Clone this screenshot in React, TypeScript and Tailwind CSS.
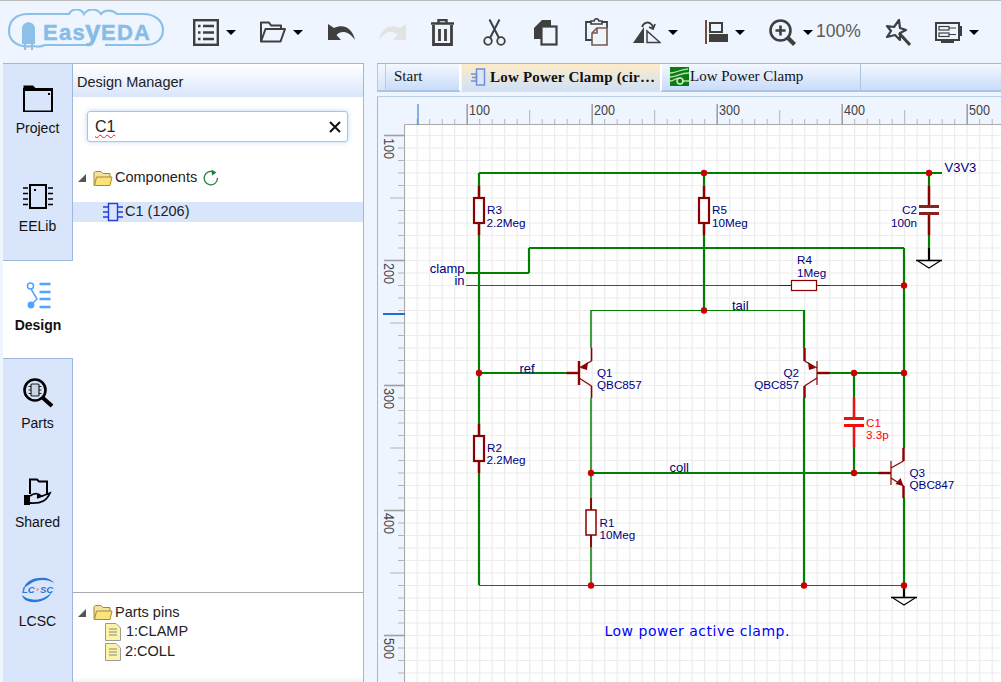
import React from "react";

const Caret = () => <span className="ml-[7px] w-0 h-0 border-x-[5px] border-x-transparent border-t-[5px] border-t-black" />;

function Logo() {
  return (
    <svg width="157" height="46" viewBox="6 13 157 46" className="shrink-0">
      <path d="M33 50 C18 52 8 46 8 35 C8 24 16 18 27 18 L68 18 C71 12 80 12 83 18 C87 12 96 12 100 18 C104 13 112 14 116 18 L142 18 C154 18 162 25 162 34 C162 44 154 49 144 49 L104 49 M90 49 L44 49 C40 51 37 51 33 50" fill="none" stroke="#8cc0e8" strokeWidth="2.2" />
      <path d="M21 48 L21 33 C21 24 34 24 34 33 L34 48 Z" fill="#8cc0e8" />
      <path d="M24 47 V54 M31 47 V54" stroke="#8cc0e8" strokeWidth="2.2" />
      <text x="42" y="44" fill="#86bce6" stroke="#86bce6" strokeWidth="0.4" fontFamily="Liberation Sans" fontWeight="700" fontSize="22" letterSpacing="1.3">Eas<tspan fontSize="28" dx="-1">y</tspan><tspan dx="-1">EDA</tspan></text>
    </svg>
  );
}

const Ic = ({ w, h, vb, children, cls }: { w: number; h: number; vb: string; children: React.ReactNode; cls: string }) => (
  <svg width={w} height={h} viewBox={vb} className={"shrink-0 " + cls}>{children}</svg>
);

function Toolbar() {
  const ink = "#3f3f3f";
  return (
    <div className="flex items-center h-[63px] bg-[#eef5ff] border-t border-t-[#bdbdbd] shrink-0 pl-[7px]">
      <Logo />
      <Ic cls="ml-[29px]" w={26} h={27} vb="0 0 26 27">
        <rect x="1.2" y="1.2" width="23.6" height="24.6" fill="none" stroke={ink} strokeWidth="2.4" />
        <path d="M5 7h2.5M5 13.5h2.5M5 20h2.5M10 7h11M10 13.5h11M10 20h11" stroke={ink} strokeWidth="2.4" />
      </Ic>
      <Caret />
      <Ic cls="ml-[24px]" w={26} h={22} vb="0 0 26 22">
        <path d="M1 20.5 V1.5 H9 L11 4.5 H21 V8 M1 20.5 L5.5 8 H25 L20.5 20.5 Z" fill="none" stroke={ink} strokeWidth="2" strokeLinejoin="round" />
      </Ic>
      <Caret />
      <Ic cls="ml-[25px]" w={27} h={18} vb="0 0 27 18">
        <path d="M0 1 L0 17 L13 17 L8.5 12 C13 7 21 8 27 17 C25 7 17 0 6 5 Z" fill={ink} />
      </Ic>
      <Ic cls="ml-[24px]" w={27} h={18} vb="0 0 27 18">
        <path d="M27 1 L27 17 L14 17 L18.5 12 C14 7 6 8 0 17 C2 7 10 0 21 5 Z" fill="#e3e3e3" />
      </Ic>
      <Ic cls="ml-[25px]" w={23} h={27} vb="0 0 23 27">
        <path d="M0 4.5H23M7.5 4V1H15.5V4" fill="none" stroke={ink} strokeWidth="2.4" />
        <path d="M2.5 6V25.5H20.5V6M8.5 10V22M14.5 10V22" fill="none" stroke={ink} strokeWidth="2.8" />
      </Ic>
      <Ic cls="ml-[29px]" w={23} h={27} vb="0 0 23 27">
        <circle cx="5" cy="22" r="3.8" fill="none" stroke={ink} strokeWidth="1.8" />
        <circle cx="18" cy="22" r="3.8" fill="none" stroke={ink} strokeWidth="1.8" />
        <path d="M7 19 L16.5 0.5 M16 19 L6.5 0.5" stroke={ink} strokeWidth="2" />
      </Ic>
      <Ic cls="ml-[27px]" w={25} h={27} vb="0 0 25 27">
        <path d="M1 9 L9 1 H18 V7 H10 V20 H1 Z" fill={ink} />
        <rect x="8.5" y="7.5" width="15" height="18" fill="#eef5ff" stroke={ink} strokeWidth="2.2" />
      </Ic>
      <Ic cls="ml-[27px]" w={23} h={28} vb="0 0 23 28">
        <path d="M6 4 H1 V22 H7 M16 4 H22 V10" fill="none" stroke={ink} strokeWidth="1.8" />
        <path d="M6 6 V3 H9 C9.5 0 13.5 0 14 3 H17 V6 Z" fill="#eef5ff" stroke={ink} strokeWidth="1.6" />
        <path d="M7 15 L12 10 H22 V27 H7 Z M7 15 H12 V10" fill="#eef5ff" stroke="#7a5a4a" strokeWidth="1.6" />
      </Ic>
      <Ic cls="ml-[25px]" w={28} h={23} vb="0 0 28 23">
        <path d="M0 22 L11 6 V22 Z" fill={ink} />
        <path d="M14 21.5 H27 L14 10 Z" fill="none" stroke={ink} strokeWidth="1.5" />
        <path d="M9 6 C11 1 16 0 19 4 L20 7 M16 6 L20 8 L22 3" fill="none" stroke={ink} strokeWidth="1.8" />
      </Ic>
      <Caret />
      <Ic cls="ml-[27px]" w={23} h={24} vb="0 0 23 24">
        <path d="M1 0 V24" stroke="#7a4a3a" strokeWidth="2" />
        <rect x="5" y="3" width="12" height="9" fill="none" stroke={ink} strokeWidth="2" />
        <rect x="4" y="14" width="19" height="8" fill={ink} />
      </Ic>
      <Caret />
      <Ic cls="ml-[24px]" w={27} h={27} vb="0 0 27 27">
        <circle cx="11.5" cy="11.5" r="10" fill="none" stroke={ink} strokeWidth="2.6" />
        <path d="M6.5 11.5H16.5M11.5 6.5V16.5" stroke={ink} strokeWidth="2.6" />
        <path d="M18.5 18.5 L25.5 25.5" stroke={ink} strokeWidth="4.2" />
      </Ic>
      <Caret />
      <span className="ml-[3px] w-[46px] text-[17.5px] leading-none text-[#5a5a5a] [font-family:'Liberation_Sans',sans-serif]">100%</span>
      <Ic cls="ml-[22px]" w={27} h={27} vb="0 0 27 27">
        <path d="M3 7 L10 8 L15 1 L16 9 L22 11 L16 14 L16 21 L11 16 L3 18 L7 12 Z" fill="none" stroke={ink} strokeWidth="2.2" strokeLinejoin="round" />
        <path d="M15 14 L26 26" stroke={ink} strokeWidth="3" />
      </Ic>
      <Ic cls="ml-[24px]" w={27} h={21} vb="0 0 27 21">
        <rect x="1" y="1" width="23" height="17" fill="none" stroke={ink} strokeWidth="2" />
        <path d="M24 4H27V14H24" fill={ink} />
        <rect x="4" y="4.5" width="10" height="3.5" fill="none" stroke={ink} strokeWidth="1.2" />
        <rect x="4" y="11" width="10" height="3.5" fill="none" stroke={ink} strokeWidth="1.2" />
        <path d="M14 6h7M14 12.5h7" stroke={ink} strokeWidth="1.2" />
        <path d="M6 19.5H19" stroke={ink} strokeWidth="3" />
      </Ic>
      <Caret />
    </div>
  );
}

const sideIcons: Record<string, React.ReactNode> = {
  Project: (
    <svg width="30" height="27" viewBox="0 0 30 27">
      <path d="M0.5 0.5 H10 L13.5 4 H29.5 V6 H0.5 Z" fill="#000" />
      <rect x="1" y="4" width="28" height="22.5" fill="none" stroke="#000" strokeWidth="2" />
      <rect x="25" y="8" width="2" height="2" fill="#000" />
    </svg>
  ),
  EELib: (
    <svg width="30" height="26" viewBox="0 0 30 26">
      <rect x="7" y="1" width="16" height="23" fill="none" stroke="#000" strokeWidth="2" />
      <rect x="11" y="5" width="2" height="2" fill="#000" />
      <path d="M0 4h5M0 9.5h5M0 15h5M0 20.5h5M25 4h5M25 9.5h5M25 15h5M25 20.5h5" stroke="#000" strokeWidth="1.6" />
    </svg>
  ),
  Design: (
    <svg width="26" height="28" viewBox="0 0 26 28">
      <circle cx="5.5" cy="5" r="3" fill="none" stroke="#4da3ff" strokeWidth="1.5" />
      <path d="M6 8 L12 18 L7 23" fill="none" stroke="#4da3ff" strokeWidth="1.5" />
      <circle cx="6" cy="24" r="3.4" fill="#4da3ff" />
      <path d="M14.5 3H25.5M14.5 11H25.5M14.5 18H25.5M14.5 26H25.5" stroke="#4da3ff" strokeWidth="2.4" />
    </svg>
  ),
  Parts: (
    <svg width="30" height="30" viewBox="0 0 30 30">
      <circle cx="12" cy="12" r="10.5" fill="none" stroke="#000" strokeWidth="2.6" />
      <rect x="8" y="6" width="8" height="12" rx="1" fill="#c9d4e4" stroke="#222" strokeWidth="1.2" />
      <path d="M5.5 8.5h2.5M5.5 12h2.5M5.5 15.5h2.5M16 8.5h2.5M16 12h2.5M16 15.5h2.5" stroke="#222" />
      <path d="M20 20 L29 28" stroke="#000" strokeWidth="4" />
    </svg>
  ),
  Shared: (
    <svg width="28" height="28" viewBox="0 0 28 28">
      <path d="M6 16 V1.5 H13 L15 3.5 H23 V17" fill="none" stroke="#000" strokeWidth="2" />
      <rect x="0" y="17" width="6" height="10" fill="#000" />
      <path d="M6 18 C10 15 14 15 17 18 H13 M13 20 L26 15 C23 22 18 26 6 25" fill="none" stroke="#000" strokeWidth="1.8" />
    </svg>
  ),
  LCSC: (
    <svg width="32" height="26" viewBox="0 0 32 26">
      <path d="M2 11 C4 3 14 0 24 1 C28 2 31 4 32 6 C26 2 14 2 8 7 C5 9 3 10 2 11 Z" fill="#2a78d8" />
      <path d="M30 14 C28 22 18 26 9 25 C4 24 1 22 0 18 C6 24 18 24 25 19 C27 18 29 16 30 14 Z" fill="#2a78d8" />
      <text x="0" y="16" fontSize="9.5" fontStyle="italic" fontWeight="700" fill="#2a78d8" fontFamily="Liberation Sans">LC</text>
      <text x="18" y="16" fontSize="9.5" fontStyle="italic" fontWeight="700" fill="#2a78d8" fontFamily="Liberation Sans">SC</text>
      <circle cx="15.5" cy="12.5" r="1.5" fill="#f0a0a0" />
    </svg>
  ),
};

const sideItems = [
  { n: "Project", cls: "h-[98px] flex flex-col items-center justify-end pb-[26px] gap-[7px]" },
  { n: "EELib", cls: "h-[98px] flex flex-col items-center justify-end pb-[26px] gap-[6px]" },
  { n: "Design", cls: "h-[99px] -mr-px bg-white border-y border-y-[#9db9d9] flex flex-col items-center justify-end pb-[25px] gap-[7px] font-bold" },
  { n: "Parts", cls: "h-[98px] flex flex-col items-center justify-end pb-[26px] gap-[7px]" },
  { n: "Shared", cls: "h-[98px] flex flex-col items-center justify-end pb-[25px] gap-[7px]" },
  { n: "LCSC", cls: "h-[98px] flex flex-col items-center justify-end pb-[24px] gap-[8px]" },
];

function Sidebar() {
  return (
    <div className="w-[73px] shrink-0 pl-[3px] bg-[#eef5ff] flex flex-col">
      <div className="flex-1 flex flex-col bg-[#d9e5fb] border-r border-r-[#9db9d9] border-t border-t-[#9db9d9]">
        {sideItems.map(({ n, cls }) => (
          <div key={n} className={cls}>
            <div className="h-[30px] flex items-center justify-center">{sideIcons[n]}</div>
            <span className="text-[14px] leading-[16px] text-[#111]">{n}</span>
          </div>
        ))}
      </div>
    </div>
  );
}

const Folder = () => (
  <svg width="20" height="17" viewBox="0 0 20 17" className="shrink-0">
    <path d="M1 15.5 V3 C1 2 2 1.5 3 1.5 H8 L10 3.5 H17 V7" fill="#f3e2a0" stroke="#a88a30" />
    <path d="M1.5 15.5 L3.5 7 H19 L17 15.5 Z" fill="#fbe27a" stroke="#a88a30" strokeLinejoin="round" />
  </svg>
);
const Tri = () => <span className="w-0 h-0 border-l-[8px] border-l-transparent border-b-[8px] border-b-[#555] shrink-0" />;
const Doc = () => (
  <svg width="16" height="18" viewBox="0 0 16 18" className="shrink-0">
    <path d="M0.5 0.5H11L15.5 5V17.5H0.5Z" fill="#fbf3a6" stroke="#9a9a9a" />
    <path d="M4 6H12M4 9H12M4 12H12" stroke="#888" />
  </svg>
);

function Panel() {
  return (
    <div className="w-[291px] shrink-0 bg-white border-r border-r-[#9db9d9] border-t border-t-[#9db9d9] flex flex-col [font-family:'Liberation_Sans',sans-serif]">
      <div className="h-[32px] mt-px shrink-0 pl-[4px] pt-[4px] flex items-center text-[14.5px] text-[#222] bg-gradient-to-b from-white to-[#d9e5fb]">Design Manager</div>
      <div className="mx-[14px] mt-[14px] h-[31px] w-[261px] shrink-0 flex items-center justify-between pl-[7px] pr-[5px] border border-[#9bc9ef] rounded-[3px] shadow-[0_0_5px_#b5d8f5]">
        <span className="text-[16px] text-[#222] underline decoration-wavy decoration-[#e02020] decoration-1 underline-offset-2">C1</span>
        <svg width="14" height="14" viewBox="0 0 14 14"><path d="M2 2L12 12M12 2L2 12" stroke="#111" strokeWidth="2" /></svg>
      </div>
      <div className="mt-[26px] pl-[5px] flex items-center h-[20px] text-[14.5px] text-[#222]">
        <Tri />
        <span className="ml-[7px]"><Folder /></span>
        <span className="ml-[2px]">Components</span>
        <svg width="18" height="18" viewBox="0 0 18 18" className="ml-[5px]">
          <path d="M15.5 9 A6.7 6.7 0 1 1 11.5 3" fill="none" stroke="#1f7f3a" strokeWidth="1.3" />
          <path d="M9.5 0.5 L14.5 3.5 L10 6.5 Z" fill="#1f7f3a" />
        </svg>
      </div>
      <div className="mt-[14px] h-[20px] bg-[#d9e5fb] pl-[30px] flex items-center text-[14.5px] text-[#222]">
        <svg width="20" height="20" viewBox="0 0 20 20" className="shrink-0">
          <rect x="5.5" y="1.5" width="9" height="17" fill="none" stroke="#1f3fe0" strokeWidth="1.4" />
          <path d="M0 5H5M0 10H5M0 15H5M15 5H20M15 10H20M15 15H20" stroke="#1f3fe0" strokeWidth="1.4" />
        </svg>
        <span className="ml-[2px]">C1 (1206)</span>
      </div>
      <div className="flex-1" />
      <div className="h-[90px] shrink-0 border-t border-t-[#aaaaaa] pt-[10px] text-[14.5px] text-[#222] bg-gradient-to-b from-white from-[95%] to-[#f0f0f0]">
        <div className="pl-[5px] flex items-center h-[19px]">
          <Tri />
          <span className="ml-[7px]"><Folder /></span>
          <span className="ml-[2px]">Parts pins</span>
        </div>
        <div className="pl-[32px] flex items-center h-[20px]"><Doc /><span className="ml-[5px]">1:CLAMP</span></div>
        <div className="pl-[32px] flex items-center h-[20px]"><Doc /><span className="ml-[4px]">2:COLL</span></div>
      </div>
    </div>
  );
}

function Tabs() {
  const base = "h-[28px] flex items-center shrink-0 text-[15px] text-[#111] pb-[2px]";
  return (
    <div className="h-[34px] shrink-0 flex items-start bg-[#eef5ff] border-t border-t-[#9db9d9] border-b border-b-[#b9cfe8] [font-family:'Liberation_Serif',serif]">
      <div className="w-[9px] h-[28px] shrink-0 border-x border-x-[#b5cbe5] border-b-2 border-b-[#aac5e3] bg-gradient-to-b from-[#f4f8ff] to-[#d6e5fa]" />
      <div className={base + " w-[75px] pl-[8px] border-b-2 border-b-[#aac5e3] border-r-2 border-r-white bg-gradient-to-b from-[#f4f8ff] to-[#c9dcf8]"}>Start</div>
      <div className={base + " w-[198px] pl-[9px] ml-px font-bold tracking-[0.2px] bg-gradient-to-b from-[#fdebc8] to-[#cfe0f8]"}>
        <svg width="18" height="18" viewBox="0 0 18 18" className="shrink-0 mr-[1px]">
          <rect x="5.5" y="1" width="8" height="16" fill="#dfe6f8" stroke="#6f8fe0" strokeWidth="1.5" />
          <path d="M0 6H5.5V13H0M5.5 9.5H1" fill="none" stroke="#6f8fe0" strokeWidth="1.5" />
        </svg>
        <span>Low Power Clamp (cir…</span>
      </div>
      <div className={base + " w-[201px] pl-[8px] border-l-2 border-l-white border-b-2 border-b-[#aac5e3] border-r border-r-[#a9c4e0] bg-gradient-to-b from-[#f4f8ff] to-[#c9dcf8]"}>
        <svg width="19" height="19" viewBox="0 0 19 19" className="shrink-0 mr-[1px]">
          <rect width="19" height="19" fill="#0a7d12" />
          <path d="M0 6 C6 6 8 3 18 2 M0 10 C6 10 10 6 19 6 M0 14 C3 14 5 12 8 11 M12 14H19" fill="none" stroke="#b9dfae" strokeWidth="1.3" />
          <circle cx="10" cy="14" r="3" fill="none" stroke="#d9ecd0" strokeWidth="1.4" />
        </svg>
        <span>Low Power Clamp</span>
      </div>
      <div className="flex-1 h-[28px] border-b-2 border-b-[#aac5e3] bg-gradient-to-b from-[#f4f8ff] to-[#c9dcf8]" />
    </div>
  );
}

type L = [number, number, number, number];
const G = "#008000";
const R = "#8b0000";
const thick: L[] = [
  [479, 173, 942, 173], [479, 173, 479, 585], [704, 173, 704, 310], [929, 173, 929, 248],
  [529, 248, 904, 248], [529, 248, 529, 273], [466, 273, 529, 273], [904, 248, 904, 448], [904, 498, 904, 585],
  [479, 373, 567, 373], [829, 373, 904, 373], [854, 373, 854, 473], [591, 473, 879, 473],
  [804, 398, 804, 585], [804, 310, 804, 348],
];
const thin: L[] = [
  [466, 285.5, 904, 285.5], [591, 310.5, 804, 310.5], [591, 310, 591, 348], [591, 398, 591, 585], [479, 585.5, 904, 585.5],
];

const Res = ({ x, y, w = 2.4, b = 2.2 }: { x: number; y: number; w?: number; b?: number }) => (
  <g>
    <path d={`M${x} ${y}V${y + 49}`} stroke={R} strokeWidth={w} />
    <rect x={x - 5} y={y + 12} width={10} height={25} fill="#fff" stroke={R} strokeWidth={b} />
  </g>
);

const Tran = ({ bx, dir, y, lead, bar, wl }: { bx: number; dir: 1 | -1; y: number; lead: "top" | "bot"; bar: number; wl: number }) => {
  const cx = bx + dir * 12.5;
  return (
    <g>
      <path d={`M${bx - dir * 12.5} ${y}H${bx}`} stroke={R} strokeWidth="2.4" />
      <path d={`M${bx} ${y - 12}V${y + 12}`} stroke={R} strokeWidth={bar} />
      <path d={`M${bx} ${y - 5}L${cx} ${y - 12}`} fill="none" stroke={R} strokeWidth="1.3" />
      <path d={`M${bx} ${y + 5}L${cx} ${y + 13}`} fill="none" stroke={R} strokeWidth="1.3" />
      <path d={`M${cx} ${y - 12}V${y - 25}M${cx} ${y + 13}V${y + 25}`} fill="none" stroke={R} strokeWidth={wl} />
      {lead === "top" ? (
        <path d={`M${bx + dir * 1.5} ${y - 5} L${bx + dir * 9} ${y - 11} L${bx + dir * 8} ${y - 3} Z`} fill={R} />
      ) : (
        <path d={`M${cx} ${y + 13} L${cx - dir * 8} ${y + 11} L${cx - dir * 3} ${y + 5} Z`} fill={R} />
      )}
    </g>
  );
};

const dots: [number, number][] = [
  [704, 173], [929, 173], [904, 285.5], [704, 310.5], [479, 373], [854, 373], [904, 373],
  [591, 473], [854, 473], [591, 585.5], [804, 585.5], [904, 585.5],
];

const labels: [string, number, number, ("start" | "end")?, string?, number?][] = [
  ["V3V3", 944.5, 172, "start", undefined, 13], ["R3", 487, 214], ["2.2Meg", 486.5, 227], ["R5", 712, 214], ["10Meg", 712, 227],
  ["C2", 917, 214, "end"], ["100n", 917, 227, "end"], ["clamp", 464.5, 272.5, "end", undefined, 13], ["in", 464.5, 285, "end", undefined, 13],
  ["R4", 797, 264], ["1Meg", 797, 277], ["tail", 732, 310, "start", undefined, 13], ["ref", 519.5, 372.5, "start", undefined, 13],
  ["Q1", 597, 377], ["QBC857", 597, 389], ["Q2", 799, 377, "end"], ["QBC857", 799, 389, "end"],
  ["C1", 866, 427, "start", "#ff0000"], ["3.3p", 866, 439, "start", "#ff0000"],
  ["R2", 487, 452], ["2.2Meg", 486.5, 464], ["coll", 669.5, 472, "start", undefined, 13], ["R1", 599.5, 527], ["10Meg", 599.5, 539],
  ["Q3", 909.5, 477], ["QBC847", 909.5, 489],
];

function Canvas() {
  const vx: number[] = [];
  for (let x = 404.7; x < 1005; x += 12.5) vx.push(x);
  const hy: number[] = [];
  for (let y = 135.5; y < 690; y += 12.5) hy.push(y);
  return (
    <svg viewBox="377 97 624 585" className="flex-1 min-h-0 w-full block" preserveAspectRatio="none">
      <rect x="377" y="97" width="624" height="585" fill="#eef5ff" />
      <rect x="405" y="125" width="596" height="557" fill="#fff" />
      {vx.map((x) => <path key={x} d={`M${x} 125V682`} stroke="#ececec" strokeWidth="1.2" />)}
      {hy.map((y) => <path key={y} d={`M405 ${y}H1001`} stroke="#ececec" strokeWidth="1.2" />)}
      <path d="M404.5 682V124.5H1001" fill="none" stroke="#a8a8a8" />
      <path d="M377.5 97V682" stroke="#9db9d9" />
      {vx.map((x, i) => {
        const k = Math.round((x - 467.2) / 12.5);
        if (x < 410) return null;
        const big = k % 10 === 0;
        const mid = k % 5 === 0;
        return <path key={i} d={`M${x} 125V${big ? 104 : mid ? 110 : 119}`} stroke={big ? "#a0a0a0" : "#b4b4b4"} strokeWidth={big ? 1.6 : 1} />;
      })}
      {hy.map((y, i) => {
        const k = Math.round((y - 135.5) / 12.5);
        const big = k % 10 === 0;
        const mid = (k + 5) % 10 === 0;
        return <path key={i} d={`M405 ${y}H${big ? 384 : mid ? 390 : 398}`} stroke={big ? "#a0a0a0" : "#b4b4b4"} strokeWidth={big ? 1.6 : 1} />;
      })}
      <path d="M418 104V125" stroke="#1f6fd0" />
      <path d="M383 314H405" stroke="#1f6fd0" strokeWidth="2" />
      <g fontFamily="Liberation Sans" fontSize="14" fill="#444">
        {[100, 200, 300, 400, 500].map((v, i) => <text key={v} x={469 + i * 125} y={114.5} textLength="21" lengthAdjust="spacingAndGlyphs">{v}</text>)}
        {[100, 200, 300, 400, 500].map((v, i) => (
          <text key={v} transform={`translate(384 ${138 + i * 125}) rotate(90)`} textLength="21" lengthAdjust="spacingAndGlyphs">{v}</text>
        ))}
      </g>

      {thick.map((l, i) => <line key={i} x1={l[0]} y1={l[1]} x2={l[2]} y2={l[3]} stroke={G} strokeWidth="2.2" />)}
      {thin.map((l, i) => <line key={i} x1={l[0]} y1={l[1]} x2={l[2]} y2={l[3]} stroke={G} strokeWidth={l[1] === l[3] ? 1 : 1.5} />)}

      <Res x={479} y={186} />
      <Res x={704} y={186} />
      <Res x={479} y={424} />
      <Res x={591} y={498} w={1.8} b={1.5} />
      <g>
        <path d="M779.5 285.5H829" stroke={R} strokeWidth="1" />
        <rect x="791.5" y="280.5" width="25" height="10" fill="#fff" stroke={R} strokeWidth="1.2" />
      </g>
      <path d="M929 186V235" stroke={R} strokeWidth="2.4" />
      <rect x="919" y="205" width="20" height="3" fill="#8b2020" />
      <rect x="919" y="212" width="20" height="3" fill="#8b2020" />
      <rect x="920" y="208" width="18" height="4" fill="#fff" />
      <path d="M854 398V447" stroke="#f01010" strokeWidth="2.4" />
      <rect x="844" y="417" width="20" height="3" fill="#f01010" />
      <rect x="844" y="424" width="20" height="3" fill="#f01010" />
      <rect x="845" y="420" width="18" height="4" fill="#fff" />

      <Tran bx={579} dir={1} y={373} lead="top" bar={2.4} wl={1.6} />
      <Tran bx={817} dir={-1} y={373} lead="top" bar={1.2} wl={2.4} />
      <Tran bx={891} dir={1} y={473} lead="bot" bar={1.2} wl={2.4} />

      <g fill="none" stroke="#000">
        <path d="M929 248V260" strokeWidth="2.2" />
        <path d="M916 260.5H942" strokeWidth="1.6" />
        <path d="M918 261L929 268L940 261" strokeWidth="1.1" />
        <path d="M904 586V598" strokeWidth="2.2" />
        <path d="M891 597.5H917" strokeWidth="1.6" />
        <path d="M893 598L904 605L915 598" strokeWidth="1.1" />
      </g>

      {dots.map(([x, y]) => <circle key={x + "-" + y} cx={x} cy={y} r="3.2" fill="#cc0000" />)}

      <g fontFamily="Liberation Sans" fontSize="11.7">
        {labels.map(([t, x, y, a, c, s], i) => (
          <text key={i} x={x} y={y} textAnchor={a || "start"} fill={c || "#000080"} fontSize={s}>{t}</text>
        ))}
      </g>
      <text x="604.5" y="636" fontFamily="DejaVu Sans" fontSize="14" letterSpacing="0.5" fill="#0000ff">Low power active clamp.</text>
    </svg>
  );
}

export default function App() {
  return (
    <div className="w-[1001px] h-[682px] overflow-hidden flex flex-col bg-[#eef5ff] [font-family:'Liberation_Sans',sans-serif]">
      <Toolbar />
      <div className="flex-1 min-h-0 flex">
        <Sidebar />
        <Panel />
        <div className="w-[13px] shrink-0 bg-[#eef5ff]" />
        <div className="flex-1 min-w-0 flex flex-col">
          <Tabs />
          <Canvas />
        </div>
      </div>
    </div>
  );
}
